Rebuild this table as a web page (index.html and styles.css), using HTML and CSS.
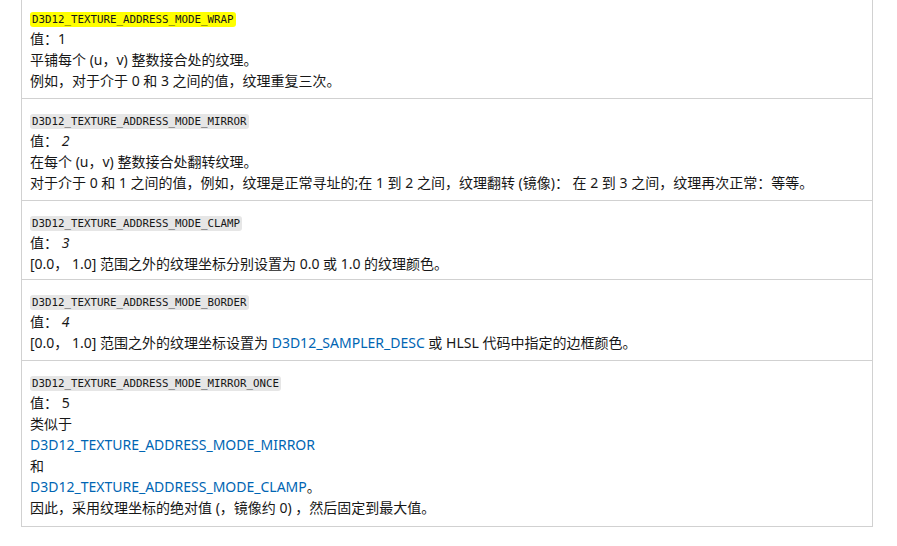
FILE: index.html
```html
<!DOCTYPE html>
<html lang="zh-CN">
<head>
    <meta charset="UTF-8">
    <meta name="viewport" content="width=device-width, initial-scale=1.0">
    <title>D3D12_TEXTURE_ADDRESS_MODE</title>
    <link rel="stylesheet" href="styles.css">
</head>
<body>
    <div class="table">
        <div class="row first">
            <p><code class="hl">D3D12_TEXTURE_ADDRESS_MODE_WRAP</code></p>
            <p>值：1</p>
            <p>平铺每个 (u，v) 整数接合处的纹理。</p>
            <p>例如，对于介于 0 和 3 之间的值，纹理重复三次。</p>
        </div>
        <div class="row">
            <p><code>D3D12_TEXTURE_ADDRESS_MODE_MIRROR</code></p>
            <p>值： <em>2</em></p>
            <p>在每个 (u，v) 整数接合处翻转纹理。</p>
            <p>对于介于 0 和 1 之间的值，例如，纹理是正常寻址的;在 1 到 2 之间，纹理翻转 (镜像)： 在 2 到 3 之间，纹理再次正常：等等。</p>
        </div>
        <div class="row short">
            <p><code>D3D12_TEXTURE_ADDRESS_MODE_CLAMP</code></p>
            <p>值： <em>3</em></p>
            <p>[0.0， 1.0] 范围之外的纹理坐标分别设置为 0.0 或 1.0 的纹理颜色。</p>
        </div>
        <div class="row">
            <p><code>D3D12_TEXTURE_ADDRESS_MODE_BORDER</code></p>
            <p>值： <em>4</em></p>
            <p>[0.0， 1.0] 范围之外的纹理坐标设置为 <a href="#">D3D12_SAMPLER_DESC</a> 或 HLSL 代码中指定的边框颜色。</p>
        </div>
        <div class="row last">
            <p><code>D3D12_TEXTURE_ADDRESS_MODE_MIRROR_ONCE</code></p>
            <p>值： 5</p>
            <p>类似于</p>
            <p><a href="#">D3D12_TEXTURE_ADDRESS_MODE_MIRROR</a></p>
            <p>和</p>
            <p><a href="#">D3D12_TEXTURE_ADDRESS_MODE_CLAMP</a>。</p>
            <p>因此，采用纹理坐标的绝对值 (，镜像约 0) ，然后固定到最大值。</p>
        </div>
    </div>
</body>
</html>
```

FILE: styles.css
```css
body { margin: 0; background: #fff; color: #171717; font-family: "Segoe UI", "Noto Sans", "Noto Sans CJK SC", sans-serif; font-size: 14px; line-height: 21px; }
.table { margin-left: 21px; width: 850px; border-left: 1px solid #d1d1d1; border-right: 1px solid #d1d1d1; border-bottom: 1px solid #d1d1d1; }
.row { padding: 10px 8px 7px; border-top: 1px solid #d1d1d1; }
.row.first { padding-top: 7px; border-top: none; }
.row.short { padding-bottom: 5px; }
.row.last { padding-bottom: 8px; }
p { margin: 0; height: 21px; white-space: nowrap; }
code { font-family: "DejaVu Sans Mono", monospace; font-size: 10.8px; line-height: 14px; background: #e6e6e6; padding: 1px 2px; border-radius: 3px; }
code.hl { background: #ffff00; }
em { font-style: italic; }
a { color: #0065b3; text-decoration: none; }
```
